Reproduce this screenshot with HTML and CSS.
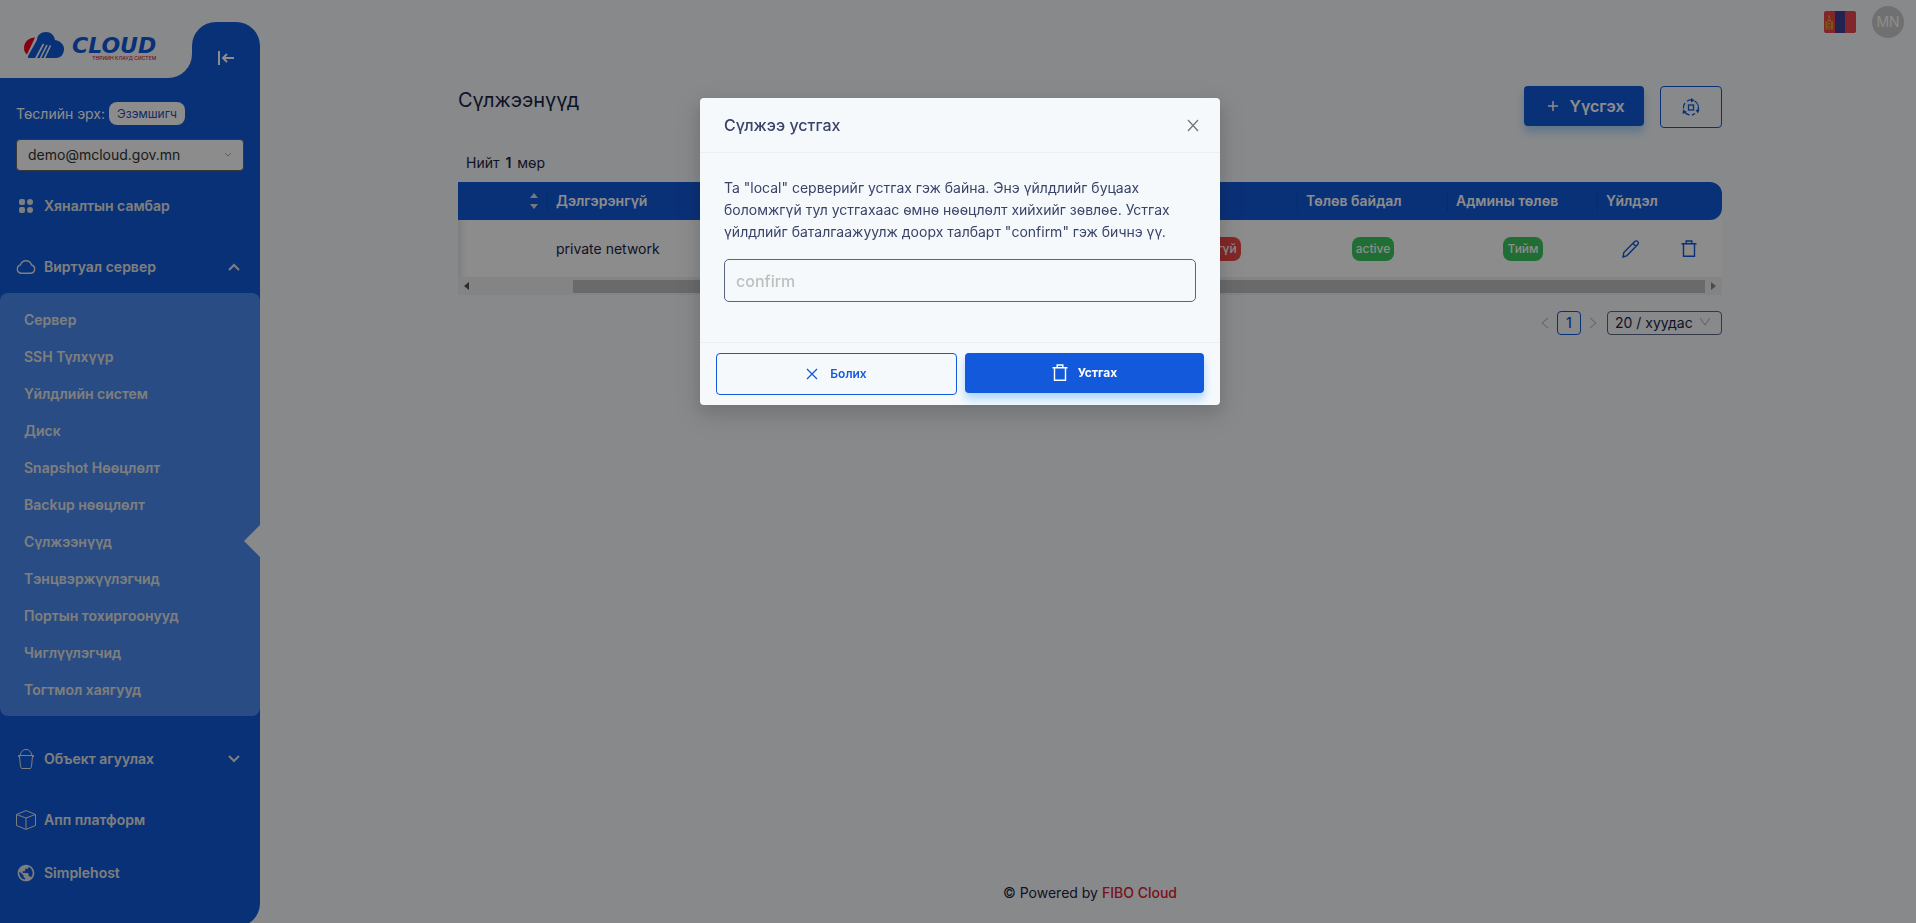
FILE: index.html
```html
<!DOCTYPE html>
<html lang="mn">

<head>
    <meta charset="UTF-8">
    <meta name="viewport" content="width=device-width, initial-scale=1.0">
    <title>Сүлжээнүүд</title>
    <link rel="stylesheet" href="styles.css">
</head>

<body>

    <div class="layout">
        <aside class="sidebar">
            <div class="sidebar__top">
                <a class="logo" href="#">
                    <svg class="logo__mark" width="41" height="28" viewBox="0 0 41 28">
                        <path fill="#f0001c" d="M11 5.500C5 5.500 0 10 0 16c0 3 1 5 3 6.500z" />
                        <path fill="#1259db" d="M4 24 13 8c0-5 4-8 9-8s8 3 9 8c6 1 9 5 9 9 0 5-3 9-8 9H6q-3 0-2-2z" />
                        <path fill="none" stroke="#f7fafd" stroke-width="1.600" d="M11.500 27 19.500 12M20 27l6.500-13.500M16 27l7-14" />
                    </svg>
                    <span class="logo__text">
                        <span class="logo__name">CLOUD</span>
                        <span class="logo__sub">ТӨРИЙН КЛАУД СИСТЕМ</span>
                    </span>
                </a>
                <button class="collapse" type="button" aria-label="Хураах">
                    <svg width="16" height="14" viewBox="0 0 16 14" fill="none" stroke="#fff" stroke-width="2">
                        <path d="M1 0v14M16 7H5M9 3 5 7l4 4" />
                    </svg>
                </button>
            </div>

            <div class="project">
                <div class="project__role">
                    <label for="project">Төслийн эрх:</label>
                    <span class="role">Эзэмшигч</span>
                </div>
                <div class="select select--project">
                    <select id="project">
                        <option>demo@mcloud.gov.mn</option>
                    </select>
                    <svg width="8" height="6" viewBox="0 0 8 6" fill="none" stroke="#aaa"><path d="m1 1 3 3 3-3" /></svg>
                </div>
            </div>

            <nav class="menu">
                <a class="menu__item" href="#">
                    <svg width="20" height="20" viewBox="0 0 20 20" fill="currentColor">
                        <rect x="3" y="3" width="6" height="6" rx="2" /><rect x="11" y="3" width="6" height="6" rx="3" />
                        <rect x="3" y="11" width="6" height="6" rx="2" /><rect x="11" y="11" width="6" height="6" rx="3" />
                    </svg>
                    Хяналтын самбар
                </a>

                <div class="menu__group">
                    <a class="menu__item" href="#">
                        <svg width="20" height="20" viewBox="0 0 20 20" fill="none" stroke="currentColor" stroke-width="1.400">
                            <path d="M5 16.200a4.200 4.200 0 0 1-.6-8.200C5.400 5.300 7.400 3.800 10 3.800s4.700 1.500 5.600 4.200a4.200 4.200 0 0 1-.6 8.200z" />
                        </svg>
                        Виртуал сервер
                        <svg class="menu__arrow" width="12" height="8" viewBox="0 0 12 8" fill="none" stroke="currentColor" stroke-width="2"><path d="m1 7 5-5 5 5" /></svg>
                    </a>
                    <ul class="submenu">
                        <li><a href="#">Сервер</a></li>
                        <li><a href="#">SSH Түлхүүр</a></li>
                        <li><a href="#">Үйлдлийн систем</a></li>
                        <li><a href="#">Диск</a></li>
                        <li><a href="#">Snapshot Нөөцлөлт</a></li>
                        <li><a href="#">Backup нөөцлөлт</a></li>
                        <li><a class="active" href="#">Сүлжээнүүд</a></li>
                        <li><a href="#">Тэнцвэржүүлэгчид</a></li>
                        <li><a href="#">Портын тохиргоонууд</a></li>
                        <li><a href="#">Чиглүүлэгчид</a></li>
                        <li><a href="#">Тогтмол хаягууд</a></li>
                    </ul>
                </div>

                <div class="menu__group">
                    <a class="menu__item" href="#">
                        <svg width="20" height="20" viewBox="0 0 20 20" fill="none" stroke="currentColor">
                            <path d="M2.500 8V6.500h15V8M3.500 7l1 10.500 1 2h9l1-2L16.500 7M4 6.500C5 2.500 7 .5 10 .5s5 2 6 6" />
                        </svg>
                        Объект агуулах
                        <svg class="menu__arrow" width="12" height="8" viewBox="0 0 12 8" fill="none" stroke="currentColor" stroke-width="2"><path d="m1 1 5 5 5-5" /></svg>
                    </a>
                </div>

                <a class="menu__item" href="#">
                    <svg width="20" height="20" viewBox="0 0 20 20" fill="none" stroke="currentColor">
                        <path d="M10 .6 19.500 4.500v11L10 19.400.5 15.500v-11zM.5 4.500 10 8l9.500-3.500M10 8v11" />
                    </svg>
                    Апп платформ
                </a>
                <a class="menu__item" href="#">
                    <svg width="20" height="20" viewBox="0 0 24 24" fill="currentColor">
                        <path d="M12 2C6.480 2 2 6.480 2 12s4.480 10 10 10 10-4.480 10-10S17.520 2 12 2zm-1 17.930c-3.950-.49-7-3.850-7-7.930 0-.62.08-1.210.21-1.790L9 15v1c0 1.100.9 2 2 2v1.930zm6.900-2.540c-.26-.81-1-1.390-1.900-1.390h-1v-3c0-.55-.45-1-1-1H8v-2h2c.55 0 1-.45 1-1V7h2c1.100 0 2-.9 2-2v-.41c2.930 1.190 5 4.060 5 7.410 0 2.080-.8 3.970-2.100 5.390z" />
                    </svg>
                    Simplehost
                </a>
            </nav>
        </aside>

        <div class="main">
            <header class="topbar">
                <svg width="32" height="22" viewBox="0 0 32 22">
                    <rect width="32" height="22" rx="2" fill="#ef4650" />
                    <rect x="11" width="10" height="22" fill="#414196" />
                    <path fill="#dca81c" d="M1.500 10.500h2v8h-2zM7 10.500h2v8H7zM4.200 12h2v1.500h-2zM4 15h2.500v1.500H4zM4 17.500h2.500v1H4zM3.500 8.500H7v2H3.500zM5 3.500l1.200 2-.2 2H4.500l-.3-2z" />
                </svg>
                <span class="avatar">MN</span>
            </header>

            <main class="content">
                <div class="content__head">
                    <h1>Сүлжээнүүд</h1>
                    <div class="actions">
                        <button class="btn btn--primary btn--create" type="button">
                            <svg width="12" height="12" viewBox="0 0 12 12" stroke="currentColor" stroke-width="1.500"><path d="M6 1v10M1 6h10" /></svg>
                            Үүсгэх
                        </button>
                        <button class="btn btn--outline btn--refresh" type="button" aria-label="Шинэчлэх">
                            <svg width="18" height="18" viewBox="0 0 18 18" fill="none" stroke="currentColor" stroke-width="1.300">
                                <rect x="6.500" y="7" width="5" height="5" />
                                <path d="M1.500 10.500A7.500 7.500 0 0 1 3 5M5 3.300A7.500 7.500 0 0 1 10 2M12.500 3A7.500 7.500 0 0 1 16 12M13 15.500a7.500 7.500 0 0 1-3 1.500M7.500 17A7.500 7.500 0 0 1 2 13" />
                                <path fill="currentColor" stroke="none" d="m9 0 3.500 2.200L9 4.500zM13.500 12l4-.5-1.500 4zM.5 16l.5-4.500 4 2.500z" />
                            </svg>
                        </button>
                    </div>
                </div>

                <p class="total">Нийт <b>1</b> мөр</p>

                <div class="table-wrap">
                    <table class="table">
                        <colgroup>
                            <col class="col-sort">
                            <col>
                            <col class="col-tag">
                            <col class="col-tag">
                            <col class="col-tag">
                            <col class="col-actions">
                        </colgroup>
                        <thead>
                            <tr>
                                <th class="sort">
                                    <svg width="8" height="16" viewBox="0 0 8 16" fill="#d5dae4"><path d="m0 5 4-5 4 5zM0 11l4 5 4-5z" /></svg>
                                </th>
                                <th>Дэлгэрэнгүй</th>
                                <th></th>
                                <th>Төлөв байдал</th>
                                <th>Админы төлөв</th>
                                <th>Үйлдэл</th>
                            </tr>
                        </thead>
                        <tbody>
                            <tr>
                                <td></td>
                                <td>private network</td>
                                <td class="center"><span class="tag tag--red">Үгүй</span></td>
                                <td class="center"><span class="tag">active</span></td>
                                <td class="center"><span class="tag">Тийм</span></td>
                                <td>
                                    <div class="row-actions">
                                        <button type="button" aria-label="Засах">
                                            <svg width="18" height="18" viewBox="0 0 18 18" fill="none" stroke="currentColor" stroke-width="1.400">
                                                <path d="m1 17 .8-4.500L12.700 1.600c1-1 2.300-.8 3 0s.9 2 0 3L5 15.600zM11 3.500l3 3" />
                                            </svg>
                                        </button>
                                        <button type="button" aria-label="Устгах">
                                            <svg width="16" height="18" viewBox="0 0 16 18" fill="none" stroke="currentColor" stroke-width="1.400">
                                                <path d="M.5 3.700h15M5.200 3.500V1h5.600v2.500M2.500 4v12.200h11V4" />
                                            </svg>
                                        </button>
                                    </div>
                                </td>
                            </tr>
                        </tbody>
                    </table>
                    <div class="scrollbar">
                        <svg width="5" height="8" viewBox="0 0 5 8" fill="#505050"><path d="M5 0v8L0 4z" /></svg>
                        <span class="scrollbar__thumb"></span>
                        <svg width="5" height="8" viewBox="0 0 5 8" fill="#8b8b8b"><path d="M0 0v8l5-4z" /></svg>
                    </div>
                </div>

                <div class="pagination">
                    <button class="pagination__nav" type="button" aria-label="Өмнөх">
                        <svg width="8" height="12" viewBox="0 0 8 12" fill="none" stroke="currentColor"><path d="M7 1 1 6l6 5" /></svg>
                    </button>
                    <button class="pagination__page" type="button">1</button>
                    <button class="pagination__nav" type="button" aria-label="Дараах">
                        <svg width="8" height="12" viewBox="0 0 8 12" fill="none" stroke="currentColor"><path d="m1 1 6 5-6 5" /></svg>
                    </button>
                    <div class="select select--size">
                        <select aria-label="Хуудасны хэмжээ">
                            <option>20 / хуудас</option>
                        </select>
                        <svg width="10" height="8" viewBox="0 0 10 8" fill="none" stroke="#aaa"><path d="m0 0 5 7 5-7" /></svg>
                    </div>
                </div>
            </main>

            <footer class="footer">© Powered by <a href="#">FIBO Cloud</a></footer>
        </div>
    </div>

    <div class="overlay">
        <div class="modal" role="dialog" aria-labelledby="modalTitle">
            <div class="modal__header">
                <h2 id="modalTitle">Сүлжээ устгах</h2>
                <button class="modal__close" type="button" aria-label="Хаах">
                    <svg width="12" height="13" viewBox="0 0 12 13" stroke="currentColor" stroke-width="1.300"><path d="m1 1 10 11M11 1 1 12" /></svg>
                </button>
            </div>
            <div class="modal__body">
                <label for="confirm">Та "local" серверийг устгах гэж байна. Энэ үйлдлийг буцаах боломжгүй тул устгахаас өмнө нөөцлөлт хийхийг зөвлөе. Устгах үйлдлийг баталгаажуулж доорх талбарт "confirm" гэж бичнэ үү.</label>
                <input id="confirm" type="text" placeholder="confirm">
            </div>
            <div class="modal__footer">
                <button class="btn btn--outline" type="button">
                    <svg width="12" height="12" viewBox="0 0 12 12" stroke="currentColor" stroke-width="1.300"><path d="m1 1 10 10M11 1 1 11" /></svg>
                    Болих
                </button>
                <button class="btn btn--primary" type="button">
                    <svg width="16" height="18" viewBox="0 0 16 18" fill="none" stroke="currentColor" stroke-width="1.400">
                        <path d="M.5 3.700h15M5.200 3.500V1h5.600v2.500M2.500 4v12.200h11V4" />
                    </svg>
                    Устгах
                </button>
            </div>
        </div>
    </div>

</body>

</html>
```

FILE: styles.css
```css
:root {
    --blue: #1259db;
    --bg: #f7fafd;
    --navy: #3a4368;
}

* {
    box-sizing: border-box;
}

body {
    margin: 0;
    background: var(--bg);
    color: #1b2444;
    font-family: Inter, "Liberation Sans", sans-serif;
    font-size: 14px;
    line-height: 22px;
}

a {
    color: inherit;
    text-decoration: none;
}

button,
input,
select {
    font: inherit;
    color: inherit;
}

button {
    padding: 0;
    border: 0;
    background: none;
    cursor: pointer;
}

svg {
    display: block;
    flex: none;
}

.layout {
    display: flex;
    height: 100vh;
    overflow: hidden;
}

/* Sidebar */
.sidebar {
    flex: none;
    width: 260px;
    height: calc(100vh + 4px);
    background: var(--blue);
    border-radius: 0 0 24px 0;
    color: #e6e8e4;
}

.sidebar__top {
    display: flex;
    align-items: flex-end;
    height: 78px;
    background: linear-gradient(var(--bg) 50px, var(--blue) 50px);
}

.logo {
    display: flex;
    align-items: flex-start;
    gap: 7px;
    width: 192px;
    height: 78px;
    padding: 32px 0 0 24px;
    background: var(--bg);
    border-radius: 0 0 24px 0;
}

.logo__text {
    display: flex;
    flex-direction: column;
    padding-top: 5px;
    white-space: nowrap;
}

.logo__name {
    color: var(--blue);
    font: italic bold 22px/18px "DejaVu Sans", sans-serif;
}

.logo__sub {
    align-self: flex-end;
    color: #e5142b;
    font-size: 5px;
    font-weight: 500;
    line-height: 6px;
}

.collapse {
    display: flex;
    align-items: center;
    justify-content: center;
    width: 68px;
    height: 56px;
    padding-top: 16px;
    background: var(--blue);
    border-radius: 24px 24px 0 0;
}

.project {
    padding: 24px 16px 4px;
}

.project__role {
    display: flex;
    align-items: center;
    gap: 4px;
    margin-bottom: 14px;
    color: #fff;
}

.role {
    padding: 0 8px;
    background: #fff;
    border-radius: 8px;
    color: #2a4fb0;
    font-size: 12px;
    line-height: 23px;
}

.select {
    position: relative;
}

.select select {
    display: block;
    width: 100%;
    margin: 0;
    appearance: none;
    outline: none;
}

.select svg {
    position: absolute;
    top: 50%;
    margin-top: -3px;
    pointer-events: none;
}

.select--project select {
    height: 32px;
    padding: 0 24px 0 11px;
    background: #fff;
    border: 1px solid #666;
    border-radius: 4px;
    color: #333;
}

.select--project svg {
    right: 12px;
}

.menu {
    font-weight: 600;
}

.menu__item {
    display: flex;
    align-items: center;
    gap: 8px;
    height: 44px;
    margin-top: 9px;
    padding: 0 20px 0 16px;
}

.menu__arrow {
    margin-left: auto;
}

.menu__group {
    padding: 8px 0;
}

.submenu {
    margin: 4px 0 -4px;
    padding: 8px 0;
    background: #4c8af2;
    border-radius: 8px;
    list-style: none;
}

.submenu a {
    display: block;
    position: relative;
    padding: 0 24px;
    line-height: 37px;
}

.submenu .active::after {
    content: "";
    position: absolute;
    top: 2px;
    right: 0;
    border: 16px solid transparent;
    border-right-color: var(--bg);
    border-left: 0;
}

/* Page */
.main {
    display: flex;
    flex: 1;
    flex-direction: column;
    padding: 0 12px 0 16px;
}

.topbar {
    display: flex;
    align-items: center;
    justify-content: flex-end;
    gap: 16px;
    height: 44px;
}

.avatar {
    width: 32px;
    height: 32px;
    background: #ccc;
    border-radius: 50%;
    color: #fff;
    line-height: 32px;
    text-align: center;
}

.content {
    width: 100%;
    max-width: 1264px;
    margin: 0 auto;
    padding-top: 42px;
}

.content__head {
    display: flex;
    justify-content: space-between;
}

.content__head h1 {
    margin: 0;
    font-size: 20px;
    font-weight: 400;
    line-height: 28px;
}

.actions {
    display: flex;
    align-items: flex-start;
    gap: 16px;
}

.btn {
    display: flex;
    align-items: center;
    justify-content: center;
    gap: 12px;
    border-radius: 4px;
    font-size: 12px;
    font-weight: 600;
}

.btn--primary {
    gap: 10px;
    height: 40px;
    background: var(--blue);
    box-shadow: 0 6px 8px rgba(64, 160, 255, .4);
    color: #fff;
    font-weight: 700;
}

.btn--outline {
    height: 42px;
    border: 1px solid var(--blue);
    color: var(--blue);
}

.btn--create {
    width: 120px;
    padding-left: 4px;
    font-size: 16px;
    font-weight: 600;
}

.btn--refresh {
    width: 62px;
}

.total {
    margin: 24px 8px 8px;
}

.total b {
    margin: 0 2px;
    font-weight: 600;
}

.table {
    width: 100%;
    table-layout: fixed;
    border-spacing: 0;
}

.col-sort {
    width: 90px;
}

.col-tag {
    width: 150px;
}

.col-actions {
    width: 124px;
}

.table th {
    height: 38px;
    padding: 0 8px;
    background: linear-gradient(#0f4fc6, #0f4fc6) right / 1px 22px no-repeat var(--blue);
    color: #fff;
    font-weight: 600;
    text-align: left;
}

.table th:last-child {
    background: var(--blue);
    border-radius: 0 12px 12px 0;
}

.table .sort {
    padding-right: 10px;
}

.table .sort svg {
    margin-left: auto;
}

.table td {
    height: 57px;
    padding: 0 8px;
    background: #fff;
}

.table td:first-child {
    box-shadow: inset 10px 0 8px -8px rgba(0, 0, 0, .15);
}

.table .center {
    text-align: center;
}

.tag {
    display: inline-block;
    padding: 0 4px;
    background: #3cc962;
    border-radius: 8px;
    color: #fff;
    font-size: 12px;
    font-weight: 500;
    line-height: 24px;
}

.tag--red {
    background: #f04848;
}

.row-actions {
    display: flex;
    gap: 41px;
    padding-left: 16px;
    color: var(--blue);
}

.scrollbar {
    display: flex;
    align-items: center;
    gap: 12px;
    height: 18px;
    padding: 0 6px;
    background: #f0f0f0;
}

.scrollbar__thumb {
    flex: 1;
    height: 13px;
    margin-left: 92px;
    margin-right: -6px;
    background: #c1c1c1;
}

.pagination {
    display: flex;
    align-items: center;
    justify-content: flex-end;
    margin-top: 16px;
}

.pagination__nav {
    display: flex;
    align-items: center;
    justify-content: center;
    width: 24px;
    height: 24px;
    color: #aaa;
}

.pagination__page {
    width: 24px;
    height: 24px;
    border: 1px solid var(--blue);
    border-radius: 4px;
    color: var(--blue);
    font-weight: 500;
}

.select--size {
    width: 115px;
    margin-left: 2px;
}

.select--size select {
    height: 24px;
    padding: 0 24px 0 7px;
    background: transparent;
    border: 1px solid #596582;
    border-radius: 4px;
}

.select--size svg {
    right: 12px;
    margin-top: -5px;
}

.footer {
    margin-top: auto;
    padding-bottom: 19px;
    text-align: center;
}

.footer a {
    color: #e0202f;
    font-weight: 500;
}

/* Modal */
.overlay {
    position: fixed;
    inset: 0;
    padding: 98px 0 0 4px;
    background: rgba(0, 0, 0, .45);
}

.modal {
    max-width: 520px;
    margin: 0 auto;
    background: #f5f9fc;
    border-radius: 4px;
    box-shadow: 0 6px 16px rgba(0, 0, 0, .12), 0 9px 28px 8px rgba(0, 0, 0, .08);
    color: var(--navy);
}

.modal__header {
    display: flex;
    align-items: center;
    justify-content: space-between;
    padding: 16px 21px 16px 24px;
    border-bottom: 1px solid #eee;
}

.modal__header h2 {
    margin: 0;
    font-size: 16px;
    font-weight: 500;
}

.modal__close {
    color: #777;
}

.modal__body {
    padding: 24px 24px 40px;
}

.modal__body label {
    display: block;
    margin-bottom: 16px;
}

.modal__body input {
    display: block;
    width: 100%;
    height: 43px;
    padding: 0 11px;
    background: transparent;
    border: 1px solid #596582;
    border-radius: 5px;
    outline: none;
    font-size: 16px;
    font-weight: 500;
}

.modal__body input::placeholder {
    color: #bfbfbf;
}

.modal__footer {
    display: flex;
    gap: 8px;
    padding: 10px 16px;
    border-top: 1px solid #eee;
}

.modal__footer .btn {
    flex: 1;
}
```
